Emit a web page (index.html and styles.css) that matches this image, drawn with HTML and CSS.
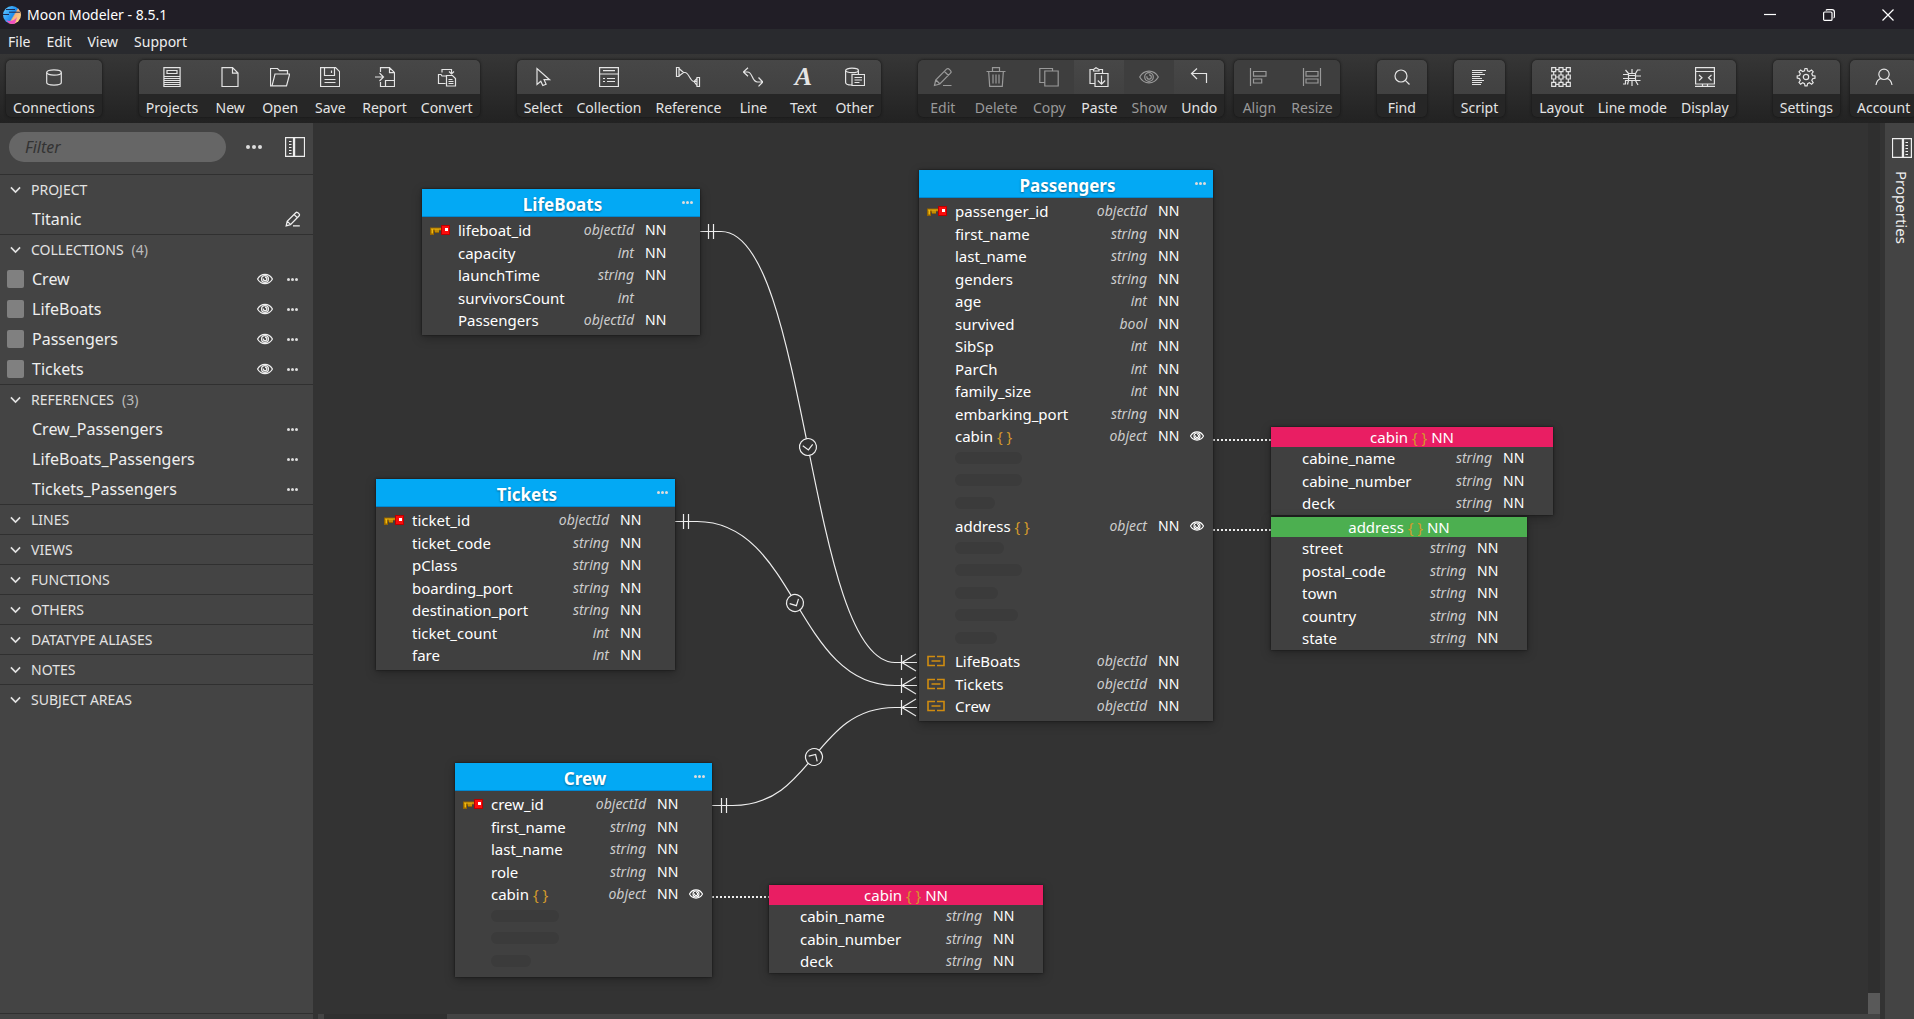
FILE: index.html
```html
<!DOCTYPE html>
<html lang="en">
<head>
<meta charset="utf-8">
<title>Moon Modeler - 8.5.1</title>
<link rel="stylesheet" href="styles.css">
</head>
<body>
<svg class="sprite" aria-hidden="true">
  <symbol id="i-db" viewBox="0 0 20 20"><ellipse cx="10" cy="5.5" rx="7.3" ry="2.6"/><path d="M2.7 5.5v10c0 3.4 14.600 3.400 14.600 0v-10"/></symbol>
  <symbol id="i-projects" viewBox="0 0 20 20"><path d="M1.900.6h16.200v18.900H1.900zM5 3.500h10v3H5zM2 9.500h16M2 11.500h16M2 13.500h16M2 15.500h16M2 17.500h16"/></symbol>
  <symbol id="i-new" viewBox="0 0 20 20"><path d="M2 .6h10.500l5.500 5.500v13.400H2zM12.500.6v5.500H18"/></symbol>
  <symbol id="i-open" viewBox="0 0 20 20"><path d="M2 18.800H.5V1.500h7l2 2.200h8v3.200M2 18.800h14.500L19.700 7H5z"/></symbol>
  <symbol id="i-save" viewBox="0 0 20 20"><path d="M.6.600h15l4 4v14.900H.6zM4.500.6v7.900h10V.6M11.500 3.500v2.500M4.500 12.500h11M4.500 15.500h11"/></symbol>
  <symbol id="i-report" viewBox="0 0 20 20"><path d="M5.500 5V.6h9l5 5v13.900h-14V15M14.500.600v5h5M0 10h8.500M4.500 6l4 4-4 4M10.500 19.500v-6h9"/></symbol>
  <symbol id="i-convert" viewBox="0 0 20 20"><path d="M5 5.500V2.500h9.500v4M12 4.500l2.500 2.500L17 4.500M8.500 16.500h-7v-9H4l1 1.500h5M9.500 8.500h6l3 3v7.500h-9zM11.500 12.500h4M11.500 14.500h5M11.500 16.500h5"/></symbol>
  <symbol id="i-select" viewBox="0 0 20 20"><path d="M4 1.500v16l3.800-3.300 2 4.300 3.300-1.300-2-4.500h5.500z"/></symbol>
  <symbol id="i-collection" viewBox="0 0 20 20"><path d="M.6.600h18.800v18.900H.6zM.6 7h18.800M4 3.700h12M4 11.500h2M8 11.500h8M4 14.500h2M8 14.500h8"/></symbol>
  <symbol id="i-reference" viewBox="0 0 26 20"><path d="M1.500.500h2.500v9H1.500zM4 1.500l4.500 4M4 9l4.500-3.500h1.500c4 0 5 9 9 9h2.500M22 10.500h2.500v9H22zM22 11.500l-3 3 3 4"/></symbol>
  <symbol id="i-line" viewBox="0 0 20 20"><path d="M0 5h4.500c5.500 0 4 10 10 10H20M5 .8L.4 5 5 9.200M15.500 10.500L19.800 15l-4.300 4.300"/></symbol>
  <symbol id="i-other" viewBox="0 0 20 20"><ellipse cx="7" cy="3.400" rx="6.400" ry="2.200"/><path d="M.6 3.500v12c0 1.800 3 2.500 5.900 2.500M13.400 3.500v4M7 7.500h12.500v11H7zM9.500 10.500h7.500M9.500 13h7.500M9.500 15.500h5"/></symbol>
  <symbol id="i-edit" viewBox="0 0 20 20"><path d="M1.500 18.500l1.200-5.500L13.500 2.200c1-1 2-.7 2.900.2l.9.900c1 1 1.200 1.900.2 2.900L6.800 17zM11.500 4.500l4 4M3 13l4 4M10 18.500h8.500"/></symbol>
  <symbol id="i-delete" viewBox="0 0 20 20"><path d="M.5 4.500h19M6.500 4V.700h7V4M2.700 5l1 14.300h12.600l1-14.300M7 7.500v9M10 7.500v9M13 7.500v9"/></symbol>
  <symbol id="i-copy" viewBox="0 0 20 20"><path d="M5.500 15.500H.8V1.500h12.700V4M5.800 4h13.400v15H5.800z"/></symbol>
  <symbol id="i-paste" viewBox="0 0 20 20"><path d="M5.500 16.500H1v-14h3.500M10 2.500h3.500V6M4.500 4V2.500l2.500-1.800 3 1.800V4zM6 6.500h13v13H6zM12.500 8.500v8.500M8.800 13.500l3.700 3.700 3.700-3.700"/></symbol>
  <symbol id="i-eye" viewBox="0 0 20 14"><path d="M.7 7C5-.8 15-.8 19.300 7 15 14.800 5 14.800.7 7z"/><circle cx="10" cy="7" r="4.300"/><path d="M10 4.800a2.200 2.200 0 1 1-2 1.500"/></symbol>
  <symbol id="i-undo" viewBox="0 0 20 20"><path d="M8 1.500L2.500 6.500 8 12M2.500 6.500h15V16"/></symbol>
  <symbol id="i-align" viewBox="0 0 20 20"><path d="M1.500 1v18M4.500 4.500h12.500v4.700H4.500zM4.500 12h8.200v4H4.500z"/></symbol>
  <symbol id="i-resize" viewBox="0 0 20 20"><path d="M1.500 1v18M18.500 1v18M4 4.500h12v4.700H4zM4 12h12v4H4z"/></symbol>
  <symbol id="i-find" viewBox="0 0 20 20"><circle cx="9" cy="9" r="6"/><path d="M13.300 13.300l4.200 4.200"/></symbol>
  <symbol id="i-script" viewBox="0 0 20 20"><path d="M3 3.500h14M3 5.500h10.500M3 7.500h13M3 9.500h8M3 11.500h10M3 13.500h12M3 15.500h10M3 17.500h9"/></symbol>
  <symbol id="i-layout" viewBox="0 0 20 20"><path d="M.7.700h4v4h-4zM8 .700h4v4H8zM15.300.700h4v4h-4zM.7 8h4v4h-4zM8 8h4v4H8zM15.300 8h4v4h-4zM.7 15.300h4v4h-4zM8 15.300h4v4H8zM15.300 15.300h4v4h-4zM4.700 2.700H8M12 2.700h3.300M4.700 17.300H8M12 17.300h3.300M4.700 10H8M12 10h3.300M2.700 4.700V8M10 4.700V8M17.300 4.700V8M2.700 12v3.300M10 12v3.300M17.300 12v3.300"/></symbol>
  <symbol id="i-linemode" viewBox="0 0 20 20"><path d="M6.500 6.500h7v7h-7zM6 8.500h8M6 11.500h8M10 2v4M10 14v5M1 7.500h5M14 13.500h4.500M13.500 6.500l2-3.500h3M6.500 13.500h-3V17H1M3.500 3l3 3.500M14 9h5M1 11.500h5M13.500 13.500l2.500 4.500M6.500 13.500l-1 4"/></symbol>
  <symbol id="i-display" viewBox="0 0 20 20"><path d="M.6.600h18.800v16.400H.6zM.6 4.500h18.800M4 8l3 2.700L4 13.500M16.500 8l-3 2.700 3 2.800M0 19.400h20M7.500 17v2M12.500 17v2"/></symbol>
  <symbol id="i-settings" viewBox="0 0 20 20"><circle cx="10" cy="10" r="2.700"/><path d="M8.500 3.700L9 1.500h2l.5 2.200 1.800.8 2.200-1.500 1.700 1.700-1.400 2 .8 1.900 2.400.4v2.200l-2.400.5-.8 1.800 1.400 2.100-1.600 1.600-2.200-1.400-1.800.8-.5 2.300H9l-.5-2.300-1.800-.8-2.100 1.400L3 15.500l1.300-2-.8-1.900-2.300-.5V9l2.300-.5.8-1.800L3 4.700 4.600 3l2.100 1.500z"/></symbol>
  <symbol id="i-account" viewBox="0 0 20 20"><circle cx="10" cy="7.300" r="5.200"/><path d="M2 18c.5-3.800 2.500-6 5.200-6.700M18 18c-.5-3.800-2.500-6-5.200-6.700"/></symbol>
  <symbol id="i-panel" viewBox="0 0 20 20"><path d="M.6.600h7.900v18.800H.6zM9.600.600h9.900v18.800H9.600zM4 4.500h2.500M4 7.500h2.500M4 10.500h2.500M4 13.500h2.500M4 16.500h2.500"/></symbol>
  <symbol id="i-chevron" viewBox="0 0 12 8"><path d="M1 1.200l5 5 5-5"/></symbol>
  <symbol id="i-key" viewBox="0 0 20 12"><g stroke="none"><path fill="#946400" d="M0 3.500h12v3H9V9H5V7.500H4V11H0z"/><path fill="#f0b80e" d="M1 4.500h11v1H8.500V8h-1V5.500h-1V8h-1V5.500H3V9.500H1.500V5.500H1z"/><path fill="#b80000" d="M11 1h9v10h-9z"/><path fill="#fa0c0c" d="M12 2h7v8h-7z"/><path fill="#fff" d="M15 4h3v3h-3z"/></g></symbol>
  <symbol id="i-link" viewBox="0 0 18 12"><path stroke="#d08c10" stroke-width="1.600" d="M8 1.500H1v9h7M10 1.500h7v9h-7M4.500 6h9"/></symbol>
</svg>

<header class="titlebar">
  <svg class="logo" viewBox="0 0 18 18"><defs><linearGradient id="moon" x1="0" y1=".2" x2="1" y2=".8"><stop offset="0" stop-color="#5ec8ff"/><stop offset=".55" stop-color="#1a8cf0"/><stop offset=".62" stop-color="#f7b27c"/><stop offset="1" stop-color="#ffd98a"/></linearGradient></defs><circle cx="9" cy="9" r="9" fill="url(#moon)"/><path d="M3 14c4 2 8 1 11-3l-2 6.500c-3 1.200-7 0-9-3.500z" fill="#f050c0"/><path d="M3 3.500h9M6 6.200h11M0 8.500h6" stroke="#1c2a50" stroke-width="1"/></svg>
  <h1 class="title">Moon Modeler - 8.5.1</h1>
  <div class="winctl">
    <button aria-label="Minimize"><svg viewBox="0 0 12 12"><path d="M0 5.500h12"/></svg></button>
    <button aria-label="Restore"><svg viewBox="0 0 12 12"><rect x=".6" y="3" width="8.400" height="8.400" rx="1"/><path d="M3 1.500C3.200.8 3.800.600 4.500.600H9c1.500 0 2.400.9 2.400 2.400v4.500c0 .7-.2 1.300-.9 1.500"/></svg></button>
    <button aria-label="Close"><svg viewBox="0 0 12 12"><path d="M.5.500l11 11M11.500.500l-11 11"/></svg></button>
  </div>
</header>

<nav class="menubar"><button>File</button><button>Edit</button><button>View</button><button>Support</button></nav>

<div class="toolbar">
  <div class="group"><button class="tool"><span class="pic"><svg><use href="#i-db"/></svg></span><span class="lbl">Connections</span></button></div>
  <div class="group far">
    <button class="tool"><span class="pic"><svg><use href="#i-projects"/></svg></span><span class="lbl">Projects</span></button>
    <button class="tool"><span class="pic"><svg><use href="#i-new"/></svg></span><span class="lbl">New</span></button>
    <button class="tool"><span class="pic"><svg><use href="#i-open"/></svg></span><span class="lbl">Open</span></button>
    <button class="tool"><span class="pic"><svg><use href="#i-save"/></svg></span><span class="lbl">Save</span></button>
    <button class="tool"><span class="pic"><svg><use href="#i-report"/></svg></span><span class="lbl">Report</span></button>
    <button class="tool"><span class="pic"><svg><use href="#i-convert"/></svg></span><span class="lbl">Convert</span></button>
  </div>
  <div class="group far">
    <button class="tool"><span class="pic"><svg><use href="#i-select"/></svg></span><span class="lbl">Select</span></button>
    <button class="tool"><span class="pic"><svg><use href="#i-collection"/></svg></span><span class="lbl">Collection</span></button>
    <button class="tool"><span class="pic"><svg class="wide"><use href="#i-reference"/></svg></span><span class="lbl">Reference</span></button>
    <button class="tool"><span class="pic"><svg><use href="#i-line"/></svg></span><span class="lbl">Line</span></button>
    <button class="tool"><span class="pic glyph" aria-hidden="true">A</span><span class="lbl">Text</span></button>
    <button class="tool"><span class="pic"><svg><use href="#i-other"/></svg></span><span class="lbl">Other</span></button>
  </div>
  <div class="group far">
    <button class="tool" disabled><span class="pic"><svg><use href="#i-edit"/></svg></span><span class="lbl">Edit</span></button>
    <button class="tool" disabled><span class="pic"><svg><use href="#i-delete"/></svg></span><span class="lbl">Delete</span></button>
    <button class="tool" disabled><span class="pic"><svg><use href="#i-copy"/></svg></span><span class="lbl">Copy</span></button>
    <button class="tool"><span class="pic"><svg><use href="#i-paste"/></svg></span><span class="lbl">Paste</span></button>
    <button class="tool" disabled><span class="pic"><svg><use href="#i-eye"/></svg></span><span class="lbl">Show</span></button>
    <button class="tool"><span class="pic"><svg><use href="#i-undo"/></svg></span><span class="lbl">Undo</span></button>
  </div>
  <div class="group">
    <button class="tool" disabled><span class="pic"><svg><use href="#i-align"/></svg></span><span class="lbl">Align</span></button>
    <button class="tool" disabled><span class="pic"><svg><use href="#i-resize"/></svg></span><span class="lbl">Resize</span></button>
  </div>
  <div class="group far"><button class="tool"><span class="pic"><svg><use href="#i-find"/></svg></span><span class="lbl">Find</span></button></div>
  <div class="group mid"><button class="tool"><span class="pic"><svg><use href="#i-script"/></svg></span><span class="lbl">Script</span></button></div>
  <div class="group mid">
    <button class="tool"><span class="pic"><svg><use href="#i-layout"/></svg></span><span class="lbl">Layout</span></button>
    <button class="tool"><span class="pic"><svg><use href="#i-linemode"/></svg></span><span class="lbl">Line mode</span></button>
    <button class="tool"><span class="pic"><svg><use href="#i-display"/></svg></span><span class="lbl">Display</span></button>
  </div>
  <div class="group far"><button class="tool"><span class="pic"><svg><use href="#i-settings"/></svg></span><span class="lbl">Settings</span></button></div>
  <div class="group"><button class="tool"><span class="pic"><svg><use href="#i-account"/></svg></span><span class="lbl">Account</span></button></div>
</div>

<div class="work">
  <aside class="sidebar">
    <div class="search">
      <input type="text" placeholder="Filter" aria-label="Filter">
      <button class="icon more big" aria-label="More"><i></i><i></i><i></i></button>
      <button class="icon" aria-label="Toggle panel"><svg class="panel"><use href="#i-panel"/></svg></button>
    </div>
    <section class="sec">
      <h2><svg><use href="#i-chevron"/></svg>PROJECT</h2>
      <div class="item"><span class="name">Titanic</span><button class="icon" aria-label="Edit project"><svg class="pencil"><use href="#i-edit"/></svg></button></div>
    </section>
    <section class="sec">
      <h2><svg><use href="#i-chevron"/></svg>COLLECTIONS<span class="count">(4)</span></h2>
      <div class="item"><span class="swatch"></span><span class="name">Crew</span><button class="icon" aria-label="Show"><svg class="eye"><use href="#i-eye"/></svg></button><button class="icon more" aria-label="More"><i></i><i></i><i></i></button></div>
      <div class="item"><span class="swatch"></span><span class="name">LifeBoats</span><button class="icon" aria-label="Show"><svg class="eye"><use href="#i-eye"/></svg></button><button class="icon more" aria-label="More"><i></i><i></i><i></i></button></div>
      <div class="item"><span class="swatch"></span><span class="name">Passengers</span><button class="icon" aria-label="Show"><svg class="eye"><use href="#i-eye"/></svg></button><button class="icon more" aria-label="More"><i></i><i></i><i></i></button></div>
      <div class="item"><span class="swatch"></span><span class="name">Tickets</span><button class="icon" aria-label="Show"><svg class="eye"><use href="#i-eye"/></svg></button><button class="icon more" aria-label="More"><i></i><i></i><i></i></button></div>
    </section>
    <section class="sec">
      <h2><svg><use href="#i-chevron"/></svg>REFERENCES<span class="count">(3)</span></h2>
      <div class="item"><span class="name">Crew_Passengers</span><button class="icon more" aria-label="More"><i></i><i></i><i></i></button></div>
      <div class="item"><span class="name">LifeBoats_Passengers</span><button class="icon more" aria-label="More"><i></i><i></i><i></i></button></div>
      <div class="item"><span class="name">Tickets_Passengers</span><button class="icon more" aria-label="More"><i></i><i></i><i></i></button></div>
    </section>
    <section class="sec"><h2><svg><use href="#i-chevron"/></svg>LINES</h2></section>
    <section class="sec"><h2><svg><use href="#i-chevron"/></svg>VIEWS</h2></section>
    <section class="sec"><h2><svg><use href="#i-chevron"/></svg>FUNCTIONS</h2></section>
    <section class="sec"><h2><svg><use href="#i-chevron"/></svg>OTHERS</h2></section>
    <section class="sec"><h2><svg><use href="#i-chevron"/></svg>DATATYPE ALIASES</h2></section>
    <section class="sec"><h2><svg><use href="#i-chevron"/></svg>NOTES</h2></section>
    <section class="sec"><h2><svg><use href="#i-chevron"/></svg>SUBJECT AREAS</h2></section>
    <div class="sidefoot"></div>
  </aside>

  <main class="stage">
    <div class="canvas">
      <svg class="links">
        <g class="dotted"><path d="M900 317h58M900 407h58M399 774h57"/></g>
        <path d="M387 108.500H408C495 108.500 495 539.500 582 539.500H604M395.500 101v15M400.500 101v15"/>
        <path d="M362 398.500H384C483 398.500 483 562.500 582 562.500H604M370.500 391v15M375.500 391v15"/>
        <path d="M399 682.500H420C501 682.500 501 584.500 582 584.500H604M408.500 675v15M413.500 675v15"/>
        <path d="M588.500 532v15M603 531l-14 8.500 14 8.500M588.500 555v15M603 554l-14 8.500 14 8.500M588.500 577v15M603 576l-14 8.500 14 8.500"/>
        <g class="mark" transform="translate(495 324) rotate(-8)"><circle r="8.500"/><path d="M-5-2l5 5 5-5"/></g>
        <g class="mark" transform="translate(482 480) rotate(-28)"><circle r="8.500"/><path d="M-5-2l5 5 5-5"/></g>
        <g class="mark" transform="translate(501 634) rotate(-148)"><circle r="8.500"/><path d="M-5-2l5 5 5-5"/></g>
      </svg>

      <article class="node lifeboats">
        <header><h3>LifeBoats</h3><button class="icon more" aria-label="More"><i></i><i></i><i></i></button></header>
        <table>
          <tr><td class="k"><svg class="key"><use href="#i-key"/></svg></td><td class="c">lifeboat_id</td><td class="t">objectId</td><td class="n">NN</td><td class="e"></td></tr>
          <tr><td></td><td class="c">capacity</td><td class="t">int</td><td>NN</td><td></td></tr>
          <tr><td></td><td class="c">launchTime</td><td class="t">string</td><td>NN</td><td></td></tr>
          <tr><td></td><td class="c">survivorsCount</td><td class="t">int</td><td></td><td></td></tr>
          <tr><td></td><td class="c">Passengers</td><td class="t">objectId</td><td>NN</td><td></td></tr>
        </table>
      </article>

      <article class="node tickets">
        <header><h3>Tickets</h3><button class="icon more" aria-label="More"><i></i><i></i><i></i></button></header>
        <table>
          <tr><td class="k"><svg class="key"><use href="#i-key"/></svg></td><td class="c">ticket_id</td><td class="t">objectId</td><td class="n">NN</td><td class="e"></td></tr>
          <tr><td></td><td class="c">ticket_code</td><td class="t">string</td><td>NN</td><td></td></tr>
          <tr><td></td><td class="c">pClass</td><td class="t">string</td><td>NN</td><td></td></tr>
          <tr><td></td><td class="c">boarding_port</td><td class="t">string</td><td>NN</td><td></td></tr>
          <tr><td></td><td class="c">destination_port</td><td class="t">string</td><td>NN</td><td></td></tr>
          <tr><td></td><td class="c">ticket_count</td><td class="t">int</td><td>NN</td><td></td></tr>
          <tr><td></td><td class="c">fare</td><td class="t">int</td><td>NN</td><td></td></tr>
        </table>
      </article>

      <article class="node crew">
        <header><h3>Crew</h3><button class="icon more" aria-label="More"><i></i><i></i><i></i></button></header>
        <table>
          <tr><td class="k"><svg class="key"><use href="#i-key"/></svg></td><td class="c">crew_id</td><td class="t">objectId</td><td class="n">NN</td><td class="e"></td></tr>
          <tr><td></td><td class="c">first_name</td><td class="t">string</td><td>NN</td><td></td></tr>
          <tr><td></td><td class="c">last_name</td><td class="t">string</td><td>NN</td><td></td></tr>
          <tr><td></td><td class="c">role</td><td class="t">string</td><td>NN</td><td></td></tr>
          <tr><td></td><td class="c">cabin <b>{ }</b></td><td class="t">object</td><td>NN</td><td><svg class="eye"><use href="#i-eye"/></svg></td></tr>
          <tr><td></td><td colspan="4"><span class="pill" style="width:68px"></span></td></tr>
          <tr><td></td><td colspan="4"><span class="pill" style="width:68px"></span></td></tr>
          <tr><td></td><td colspan="4"><span class="pill" style="width:40px"></span></td></tr>
        </table>
      </article>

      <article class="node passengers">
        <header><h3>Passengers</h3><button class="icon more" aria-label="More"><i></i><i></i><i></i></button></header>
        <table>
          <tr><td class="k"><svg class="key"><use href="#i-key"/></svg></td><td class="c">passenger_id</td><td class="t">objectId</td><td class="n">NN</td><td class="e"></td></tr>
          <tr><td></td><td class="c">first_name</td><td class="t">string</td><td>NN</td><td></td></tr>
          <tr><td></td><td class="c">last_name</td><td class="t">string</td><td>NN</td><td></td></tr>
          <tr><td></td><td class="c">genders</td><td class="t">string</td><td>NN</td><td></td></tr>
          <tr><td></td><td class="c">age</td><td class="t">int</td><td>NN</td><td></td></tr>
          <tr><td></td><td class="c">survived</td><td class="t">bool</td><td>NN</td><td></td></tr>
          <tr><td></td><td class="c">SibSp</td><td class="t">int</td><td>NN</td><td></td></tr>
          <tr><td></td><td class="c">ParCh</td><td class="t">int</td><td>NN</td><td></td></tr>
          <tr><td></td><td class="c">family_size</td><td class="t">int</td><td>NN</td><td></td></tr>
          <tr><td></td><td class="c">embarking_port</td><td class="t">string</td><td>NN</td><td></td></tr>
          <tr><td></td><td class="c">cabin <b>{ }</b></td><td class="t">object</td><td>NN</td><td><svg class="eye"><use href="#i-eye"/></svg></td></tr>
          <tr><td></td><td colspan="4"><span class="pill" style="width:67px"></span></td></tr>
          <tr><td></td><td colspan="4"><span class="pill" style="width:67px"></span></td></tr>
          <tr><td></td><td colspan="4"><span class="pill" style="width:40px"></span></td></tr>
          <tr><td></td><td class="c">address <b>{ }</b></td><td class="t">object</td><td>NN</td><td><svg class="eye"><use href="#i-eye"/></svg></td></tr>
          <tr><td></td><td colspan="4"><span class="pill" style="width:49px"></span></td></tr>
          <tr><td></td><td colspan="4"><span class="pill" style="width:67px"></span></td></tr>
          <tr><td></td><td colspan="4"><span class="pill" style="width:43px"></span></td></tr>
          <tr><td></td><td colspan="4"><span class="pill" style="width:63px"></span></td></tr>
          <tr><td></td><td colspan="4"><span class="pill" style="width:42px"></span></td></tr>
          <tr><td class="k"><svg class="ref"><use href="#i-link"/></svg></td><td class="c">LifeBoats</td><td class="t">objectId</td><td>NN</td><td></td></tr>
          <tr><td class="k"><svg class="ref"><use href="#i-link"/></svg></td><td class="c">Tickets</td><td class="t">objectId</td><td>NN</td><td></td></tr>
          <tr><td class="k"><svg class="ref"><use href="#i-link"/></svg></td><td class="c">Crew</td><td class="t">objectId</td><td>NN</td><td></td></tr>
        </table>
      </article>

      <article class="node sub cabine">
        <header><h3>cabin <b>{ }</b> NN</h3></header>
        <table>
          <tr><td class="k"></td><td class="c">cabine_name</td><td class="t">string</td><td class="n">NN</td></tr>
          <tr><td></td><td class="c">cabine_number</td><td class="t">string</td><td>NN</td></tr>
          <tr><td></td><td class="c">deck</td><td class="t">string</td><td>NN</td></tr>
        </table>
      </article>

      <article class="node sub address">
        <header><h3>address <b>{ }</b> NN</h3></header>
        <table>
          <tr><td class="k"></td><td class="c">street</td><td class="t">string</td><td class="n">NN</td></tr>
          <tr><td></td><td class="c">postal_code</td><td class="t">string</td><td>NN</td></tr>
          <tr><td></td><td class="c">town</td><td class="t">string</td><td>NN</td></tr>
          <tr><td></td><td class="c">country</td><td class="t">string</td><td>NN</td></tr>
          <tr><td></td><td class="c">state</td><td class="t">string</td><td>NN</td></tr>
        </table>
      </article>

      <article class="node sub cabin">
        <header><h3>cabin <b>{ }</b> NN</h3></header>
        <table>
          <tr><td class="k"></td><td class="c">cabin_name</td><td class="t">string</td><td class="n">NN</td></tr>
          <tr><td></td><td class="c">cabin_number</td><td class="t">string</td><td>NN</td></tr>
          <tr><td></td><td class="c">deck</td><td class="t">string</td><td>NN</td></tr>
        </table>
      </article>
    </div>
    <div class="vbar"><span></span></div>
    <div class="hbar"><span></span></div>
  </main>

  <aside class="props">
    <button class="icon" aria-label="Toggle properties"><svg class="panel flip"><use href="#i-panel"/></svg></button>
    <button class="tab">Properties</button>
  </aside>
</div>
</body>
</html>
```
FILE: styles.css
```css
* { box-sizing: border-box; }
html, body { height: 100%; }
body {
  margin: 0;
  display: flex;
  flex-direction: column;
  overflow: hidden;
  background: #333;
  color: #eee;
  font: 14px/20px "Noto Sans", "Open Sans", sans-serif;
}
button {
  margin: 0;
  padding: 0;
  border: 0;
  background: none;
  color: inherit;
  font: inherit;
}
h1, h2, h3 { margin: 0; font: inherit; }
svg { fill: none; stroke: currentColor; stroke-width: 1.2; display: block; flex: none; }
.sprite { position: absolute; width: 0; height: 0; }

/* window chrome */
.titlebar {
  flex: none;
  display: flex;
  align-items: center;
  height: 29px;
  padding-left: 3px;
  background: #211e26;
  color: #fff;
}
.logo { width: 18px; height: 18px; stroke: none; }
.title { margin-left: 6px; flex: 1; }
.winctl { display: flex; }
.winctl button { width: 59px; height: 29px; display: grid; place-items: center; }
.winctl svg { width: 12px; height: 12px; overflow: visible; }
.winctl button:last-child { width: 52px; margin-left: 4px; }

.menubar {
  flex: none;
  display: flex;
  gap: 16px;
  height: 25px;
  padding-left: 8px;
  background: #292a2e;
}

/* toolbar */
.toolbar {
  flex: none;
  display: flex;
  gap: 10px;
  height: 69px;
  padding: 6px 0 6px 6px;
  background: linear-gradient(#363636, #222);
}
.group {
  flex: none;
  display: flex;
  height: 57px;
  border-radius: 5px;
  overflow: hidden;
  background: #262626;
  box-shadow: 0 0 3px #111;
}
.far { margin-left: 27px; }
.mid { margin-left: 17px; }
.tool { min-width: 50px; display: flex; flex-direction: column; color: #e4e4e4; }
.tool:disabled { color: #999; }
.pic {
  width: 100%;
  height: 34px;
  display: grid;
  place-items: center;
  background: linear-gradient(#474747, #414141);
}
.tool:disabled .pic { background: #3e3e3e; }
.pic svg { width: 20px; height: 20px; }
.pic .wide { width: 26px; }
.glyph { font: italic bold 26px/34px "Liberation Serif", serif; }
.lbl { width: 100%; height: 23px; padding: 4px 7px 0; line-height: 19px; text-align: center; white-space: nowrap; }

.work { flex: 1; min-height: 0; display: flex; }

/* sidebar */
.sidebar { flex: none; width: 313px; display: flex; flex-direction: column; background: #444; }
.search { flex: none; display: flex; align-items: center; height: 51px; padding: 9px 8px 12px 9px; }
.search input {
  width: 217px;
  height: 30px;
  padding: 0 16px;
  border: 0;
  border-radius: 15px;
  background: #666;
  color: #eee;
  font: italic 16px/20px "Noto Sans", sans-serif;
}
.search input::placeholder { color: #333; opacity: 1; }
.icon { display: grid; place-items: center; }
.more { display: flex; align-items: center; gap: 1px; }
.more i { width: 3px; height: 3px; border-radius: 50%; background: #ddd; }
.more.big { gap: 2px; margin: 0 23px 0 20px; }
.more.big i { width: 4px; height: 4px; }
.panel { width: 20px; height: 20px; }
.flip { transform: scaleX(-1); }
.sec { border-top: 1px solid #303030; }
.sec h2 {
  display: flex;
  align-items: center;
  height: 29px;
  padding-left: 10px;
  color: #e2e2e2;
}
.sec h2 svg { width: 11px; height: 8px; margin-right: 10px; stroke-width: 1.8; }
.count { margin-left: 8px; color: #bbb; }
.item { display: flex; align-items: center; height: 30px; padding: 0 15px 0 7px; }
.item .name { flex: 1; padding-left: 25px; font-size: 16px; }
.swatch { width: 17px; height: 18px; border-radius: 2px; background: #808080; }
.swatch + .name { padding-left: 8px; }
.item .more { margin-left: 14px; }
.eye { width: 16px; height: 12px; stroke-width: 1.6; }
.pencil { width: 16px; height: 16px; margin-right: -3px; stroke-width: 1.6; }
.sidefoot { margin-top: auto; height: 6px; border-top: 1px solid #303030; }

/* diagram */
.stage {
  flex: 1;
  min-width: 0;
  display: grid;
  grid-template: 1fr 5px / 1fr 12px;
  padding-right: 5px;
}
.canvas { position: relative; overflow: hidden; background: #333; }
.vbar { display: flex; align-items: flex-end; background: #2f2f2f; }
.vbar span { width: 12px; height: 21px; background: #595959; }
.hbar { grid-column: 1 / 3; margin-left: 5px; padding-left: 6px; background: #444; }
.hbar span { display: block; width: 123px; height: 5px; background: #303030; }
.links { position: absolute; inset: 0; width: 100%; height: 100%; color: #eee; }
.dotted { stroke-width: 2; stroke-dasharray: 2 2; }
.mark circle { fill: #333; }

.node {
  position: absolute;
  background: #404040;
  box-shadow: 0 0 2px #111, 0 3px 10px rgba(0, 0, 0, .3);
  padding-bottom: 4px;
  color: #fff;
}
.node header {
  display: flex;
  align-items: center;
  height: 28px;
  padding: 0 7px 0 21px;
  margin-bottom: 2px;
  background: #03a9f4;
  border-bottom: 1px solid #0288d1;
}
.node h3 { flex: 1; text-align: center; font-weight: 700; font-size: 17px; padding-top: 4px; text-shadow: 0 1px 2px rgba(0, 0, 0, .4); }
.node table { width: 100%; border-spacing: 0; }
.node tr { height: 22px; }
.node tr:nth-child(even) { height: 23px; }
.node td { padding: 0; line-height: 20px; white-space: nowrap; }
.node b { font-weight: 400; color: #d39a2c; }
.node .k { width: 36px; padding-left: 8px; }
.node .c { font-size: 15px; }
.node .t { text-align: right; font-style: italic; color: #ccc; padding-right: 11px; }
.node .n { width: 32px; }
.node .e { width: 23px; }
.node .eye { width: 14px; height: 12px; }
.key { width: 20px; height: 12px; }
.ref { width: 18px; height: 12px; }
.pill { display: block; height: 12px; margin-bottom: 2px; border-radius: 6px; background: #3b3b3b; }

.sub { padding-bottom: 1px; }
.sub header { height: 20px; margin: 0; padding: 0; border: 0; background: #e91e63; }
.sub h3 { font-weight: 400; font-size: 15px; padding: 0; text-shadow: none; }
.sub.address header { background: #4caf50; }
.sub .k { width: 31px; }
.sub .n { width: 50px; }

.lifeboats { left: 109px; top: 66px; width: 278px; }
.tickets { left: 63px; top: 356px; width: 299px; }
.crew { left: 142px; top: 640px; width: 257px; }
.passengers { left: 606px; top: 47px; width: 294px; }
.cabine { left: 958px; top: 304px; width: 282px; }
.address { left: 958px; top: 394px; width: 256px; }
.cabin { left: 456px; top: 762px; width: 274px; }

/* right rail */
.props { flex: none; width: 29px; padding: 15px 0 0 7px; background: #444; }
.tab { margin-top: 13px; writing-mode: vertical-rl; font-size: 15px; line-height: 20px; }
```
